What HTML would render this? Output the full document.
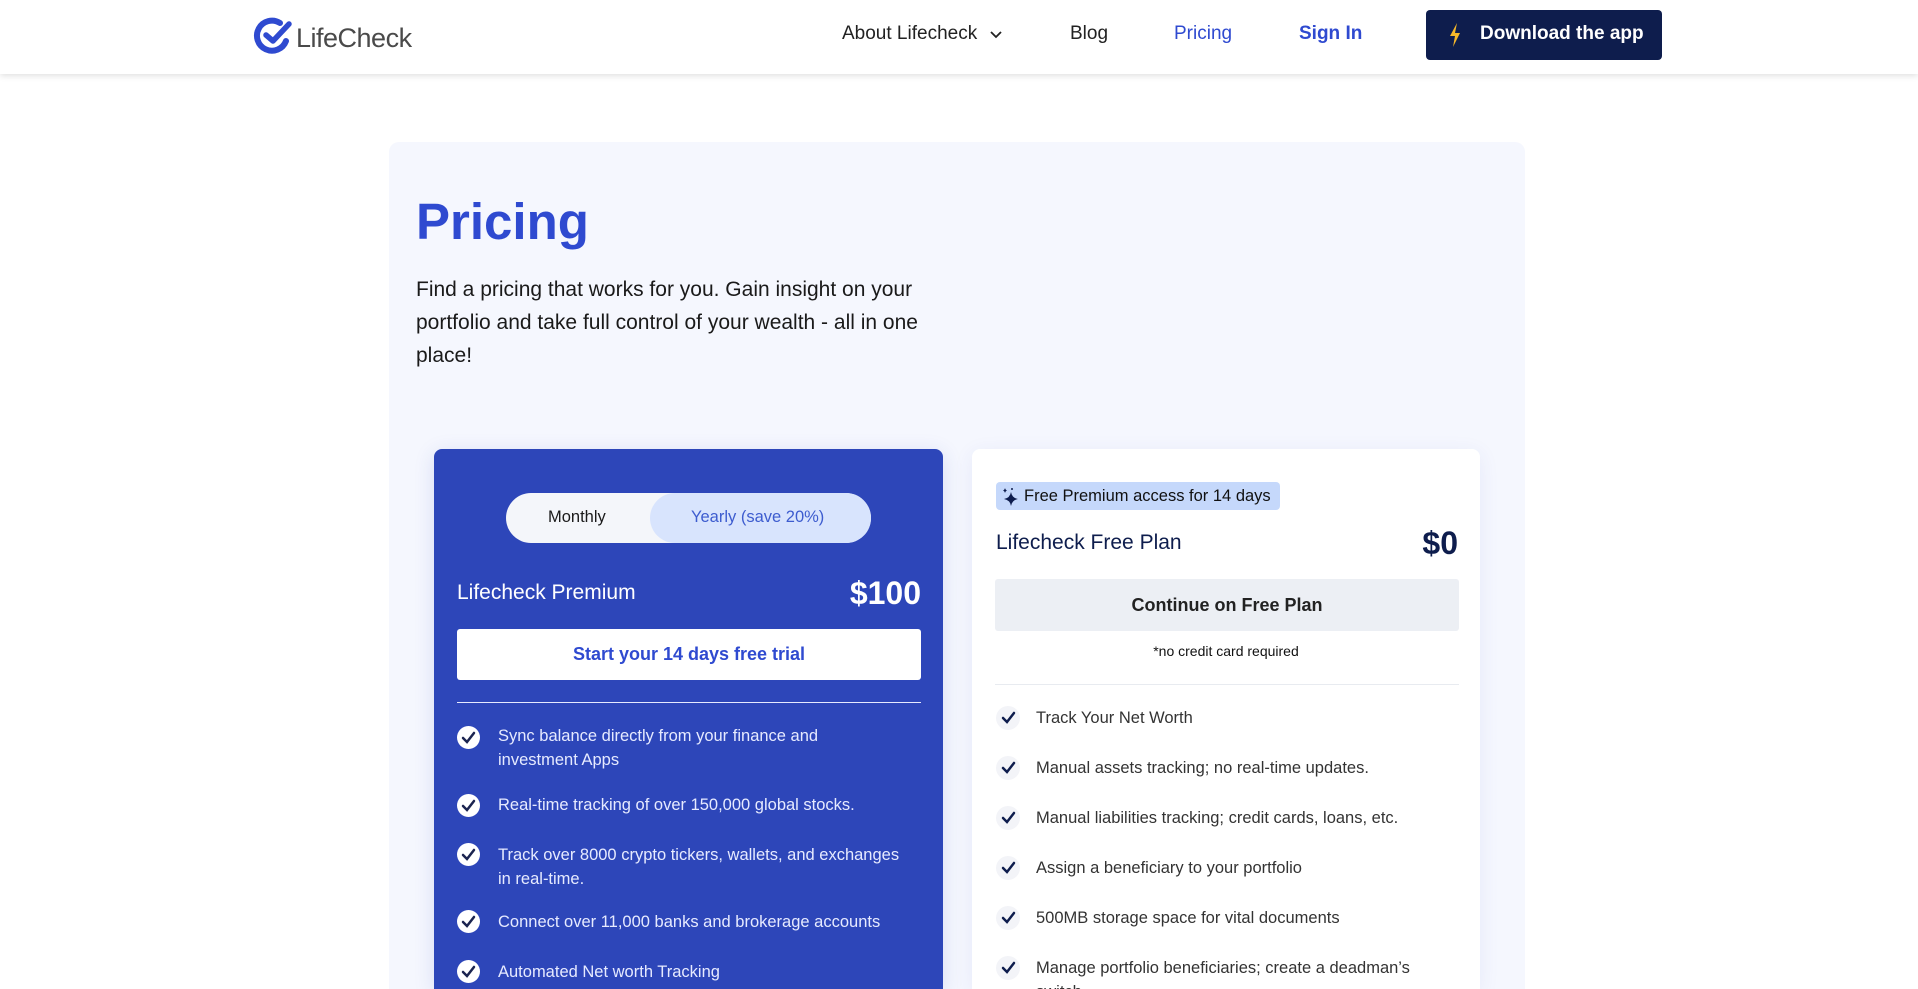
<!DOCTYPE html>
<html style="width:1918px;height:989px;overflow:hidden"><head><meta charset="utf-8"><style>
*{box-sizing:border-box;margin:0;padding:0}
body{width:1918px;height:989px;overflow:hidden;background:#fff;font-family:"Liberation Sans",sans-serif;color:#1a1a1a;position:relative}
.nav{position:absolute;left:0;top:0;width:1918px;height:74px;background:#fff;box-shadow:0 2px 6px rgba(0,0,0,.12);z-index:2}
.a{position:absolute;white-space:nowrap}
.panel{position:absolute;left:389px;top:142px;width:1136px;height:847px;background:#f5f7fe;border-radius:10px 10px 0 0}
.card{position:absolute;top:449px;height:540px;border-radius:8px 8px 0 0;overflow:hidden}
.prem{left:434px;width:509px;background:#2d46b9;box-shadow:0 4px 20px rgba(45,70,185,.15)}
.free{left:972px;width:508px;background:#fff;box-shadow:0 4px 20px rgba(45,70,185,.08)}
.pf{position:absolute;left:34px;font-size:16.5px;color:#e6eaff;line-height:24px}
.pc{position:absolute;left:23px;width:23px;height:23px;border-radius:50%;background:#fff}
.ff{position:absolute;left:64px;font-size:16.5px;color:#333;line-height:24px}
.fc{position:absolute;left:24px;width:24px;height:24px;border-radius:50%;background:#f3f4f8}
</style></head><body>
<div class="nav">
 <svg class="a" style="left:253px;top:15px" width="42" height="42" viewBox="0 0 42 42"><path d="M33 26 A15 15 0 1 1 27 8" fill="none" stroke="#2f4ad0" stroke-width="6" stroke-linecap="round"/><path d="M13 20 L20 26 L36 9" fill="none" stroke="#2f4ad0" stroke-width="5.5" stroke-linecap="round" stroke-linejoin="round"/></svg>
 <div class="a" style="left:296px;top:23px;font-size:27px;color:#4a4a4a;letter-spacing:-0.5px">LifeCheck</div>
 <div class="a" style="left:842px;top:23px;font-size:19px;color:#222">About Lifecheck</div>
 <svg class="a" style="left:989px;top:30px" width="14" height="10" viewBox="0 0 14 10"><path d="M2 2 L7 7 L12 2" fill="none" stroke="#222" stroke-width="1.8"/></svg>
 <div class="a" style="left:1070px;top:23px;font-size:19px;color:#222">Blog</div>
 <div class="a" style="left:1174px;top:23px;font-size:19px;color:#2f4ad0">Pricing</div>
 <div class="a" style="left:1299px;top:23px;font-size:19px;color:#2f4ad0;font-weight:bold">Sign In</div>
 <div class="a" style="left:1426px;top:10px;width:236px;height:50px;background:#0e1d4d;border-radius:4px"></div>
 <svg class="a" style="left:1448px;top:22px" width="14" height="26" viewBox="0 0 14 26"><path d="M9 1 L2 14 L7 14 L5 25 L12 11 L7 11 Z" fill="#f6b82a"/></svg>
 <div class="a" style="left:1480px;top:23px;font-size:19px;color:#fff;font-weight:bold">Download the app</div>
</div>
<div class="panel"></div>
<div class="a" style="left:416px;top:192px;font-size:51px;font-weight:bold;color:#2f4ad0">Pricing</div>
<div class="a" style="left:416px;top:273px;width:560px;white-space:normal;font-size:21px;line-height:33px;color:#1a1a1a">Find a pricing that works for you. Gain insight on your portfolio and take full control of your wealth - all in one place!</div>

<div class="card prem">
 <div class="a" style="left:72px;top:44px;width:365px;height:50px;border-radius:25px;background:#f4f6fa"></div>
 <div class="a" style="left:216px;top:44px;width:221px;height:50px;border-radius:25px;background:#d8e4fd"></div>
 <div class="a" style="left:114px;top:59px;font-size:16.5px;color:#1a1a1a">Monthly</div>
 <div class="a" style="left:257px;top:59px;font-size:16.5px;color:#3d5ccf">Yearly (save 20%)</div>
 <div class="a" style="left:23px;top:132px;font-size:21px;color:#fff">Lifecheck Premium</div>
 <div class="a" style="right:22px;top:126px;font-size:32px;color:#fff;font-weight:bold">$100</div>
 <div class="a" style="left:23px;top:180px;width:464px;height:51px;background:#fff;border-radius:3px;text-align:center;line-height:51px;font-size:18px;font-weight:bold;color:#2f4ad0">Start your 14 days free trial</div>
 <div class="a" style="left:23px;top:253px;width:464px;height:1px;background:#e6eaff"></div>
 <div class="pc" style="top:277px"></div><div class="pf" style="left:64px;top:275px">Sync balance directly from your finance and<br>investment Apps</div>
 <div class="pc" style="top:345px"></div><div class="pf" style="left:64px;top:344px">Real-time tracking of over 150,000 global stocks.</div>
 <div class="pc" style="top:394px"></div><div class="pf" style="left:64px;top:394px">Track over 8000 crypto tickers, wallets, and exchanges<br>in real-time.</div>
 <div class="pc" style="top:461px"></div><div class="pf" style="left:64px;top:461px">Connect over 11,000 banks and brokerage accounts</div>
 <div class="pc" style="top:511px"></div><div class="pf" style="left:64px;top:511px">Automated Net worth Tracking</div>
 <svg class="a" style="left:23px;top:277px" width="23" height="260" viewBox="0 0 23 260" fill="none" stroke="#1b2450" stroke-width="2.5" stroke-linecap="round">
  <path d="M6 12 L10 16 L17 7"/><path d="M6 80 L10 84 L17 75"/><path d="M6 129 L10 133 L17 124"/><path d="M6 196 L10 200 L17 191"/><path d="M6 246 L10 250 L17 241"/></svg>
</div>

<div class="card free">
 <div class="a" style="left:24px;top:33px;width:284px;height:28px;background:#c5d8fb;border-radius:4px"></div>
 <svg class="a" style="left:29px;top:38px" width="18" height="20" viewBox="0 0 18 20"><path d="M10 5 Q11 11 17 12 Q11 13 10 19 Q9 13 3 12 Q9 11 10 5Z M4 1 Q4.5 3 6 3.5 Q4.5 4 4 6 Q3.5 4 2 3.5 Q3.5 3 4 1Z" fill="#0e1d4d"/><circle cx="11" cy="2" r="1" fill="#0e1d4d"/></svg>
 <div class="a" style="left:52px;top:38px;font-size:16.5px;color:#111">Free Premium access for 14 days</div>
 <div class="a" style="left:24px;top:82px;font-size:21px;color:#0e1d4d">Lifecheck Free Plan</div>
 <div class="a" style="right:22px;top:76px;font-size:32px;color:#0e1d4d;font-weight:bold">$0</div>
 <div class="a" style="left:23px;top:130px;width:464px;height:52px;background:#eceff4;border-radius:3px;text-align:center;line-height:52px;font-size:18px;font-weight:bold;color:#222">Continue on Free Plan</div>
 <div class="a" style="left:0;width:508px;top:194px;text-align:center;font-size:14px;color:#111">*no credit card required</div>
 <div class="a" style="left:23px;top:235px;width:464px;height:1px;background:#e8ebf0"></div>
 <div class="fc" style="top:257px"></div><div class="ff" style="top:257px">Track Your Net Worth</div>
 <div class="fc" style="top:307px"></div><div class="ff" style="top:307px">Manual assets tracking; no real-time updates.</div>
 <div class="fc" style="top:357px"></div><div class="ff" style="top:357px">Manual liabilities tracking; credit cards, loans, etc.</div>
 <div class="fc" style="top:407px"></div><div class="ff" style="top:407px">Assign a beneficiary to your portfolio</div>
 <div class="fc" style="top:457px"></div><div class="ff" style="top:457px">500MB storage space for vital documents</div>
 <div class="fc" style="top:507px"></div><div class="ff" style="top:507px">Manage portfolio beneficiaries; create a deadman’s<br>switch</div>
 <svg class="a" style="left:24px;top:257px" width="24" height="280" viewBox="0 0 24 280" fill="none" stroke="#0e1d4d" stroke-width="2.5" stroke-linecap="round">
  <path d="M7 12 L11 16 L18 7"/><path d="M7 62 L11 66 L18 57"/><path d="M7 112 L11 116 L18 107"/><path d="M7 162 L11 166 L18 157"/><path d="M7 212 L11 216 L18 207"/><path d="M7 262 L11 266 L18 257"/></svg>
</div>
</body></html>
